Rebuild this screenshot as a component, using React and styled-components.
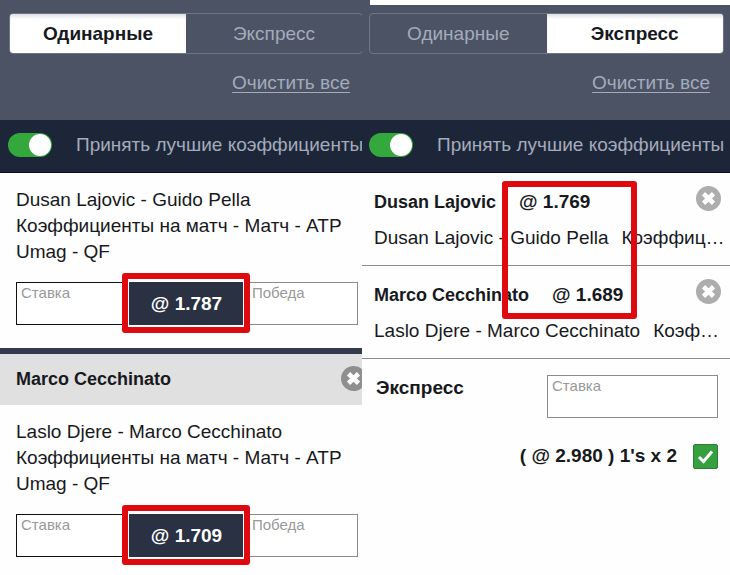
import React, { useState } from 'react';
import styled, { createGlobalStyle } from 'styled-components';

const GlobalStyle = createGlobalStyle`
  * {
    box-sizing: border-box;
  }

  body {
    margin: 0;
    background: #fefefe;
    color: #17191d;
    font-family: "Liberation Sans", Arial, sans-serif;
    font-size: 19px;
    line-height: 26px;
  }

  button, input {
    font: inherit;
    margin: 0;
  }
`;

const Page = styled.main`
  display: grid;
  grid-template-columns: 362fr 368fr;
`;

const Pane = styled.section`
  min-width: 0;
  overflow: hidden;
`;

const Header = styled.header`
  display: flex;
  flex-direction: column;
  align-items: flex-end;
  height: 120px;
  padding: 13px 0 0 ${props => (props.$cut ? 9 : 7)}px;
  background: #4b5365;
  position: relative;
`;

// white strip left over the top of the second slip
const TopStrip = styled.div`
  position: absolute;
  top: 0;
  left: 8px;
  right: 0;
  height: 5px;
  background: #fff;
`;

const Tabs = styled.div`
  display: flex;
  align-self: stretch;
  height: 41px;
  margin-right: ${props => (props.$cut ? -1 : 6)}px;
  border: 1px solid #6d7587;
  border-radius: 4px;
  overflow: hidden;
`;

const Tab = styled.button`
  flex: 1;
  padding: 0;
  border: 0;
  background: ${props => (props.$active ? '#fff' : 'transparent')};
  box-shadow: ${props => (props.$active ? 'inset 0 4px 4px -2px #d5d8de' : 'none')};
  color: ${props => (props.$active ? '#17191d' : '#a4abbb')};
  font-weight: ${props => (props.$active ? 'bold' : 'normal')};
`;

const ClearLink = styled.a`
  margin: 16px ${props => (props.$cut ? 12 : 20)}px 0 0;
  color: #a4abbb;
  text-underline-offset: 3px;
  text-decoration-thickness: 1px;
`;

const AcceptBar = styled.label`
  display: flex;
  align-items: center;
  gap: 24px;
  height: 53px;
  padding: 0 0 2px ${props => (props.$cut ? 8 : 7)}px;
  border-bottom: 1px solid #0b0f1c;
  background: #1d2638;
  color: #a4abbb;
  white-space: nowrap;
`;

const Switch = styled.input`
  appearance: none;
  display: flex;
  flex: none;
  justify-content: flex-start;
  width: 44px;
  height: 24px;
  padding: 1px;
  border-radius: 12px;
  background: #7d8494;

  &::before {
    content: "";
    width: 22px;
    height: 22px;
    border-radius: 50%;
    background: #fff;
  }

  &:checked {
    justify-content: flex-end;
    background: #35a83d;
  }
`;

const Bet = styled.article`
  padding: 14px 4px 23px 16px;
`;

const BetInfo = styled.p`
  margin: 0 0 17px;
`;

const StakeRow = styled.div`
  display: grid;
  grid-template-columns: 113fr 118fr 111fr;
  height: 43px;
`;

const Field = styled.input`
  display: block;
  width: 100%;
  min-width: 0;
  height: 43px;
  padding: 0 4px 22px;
  border: 1px solid ${props => (props.$dark ? '#111' : '#8a8a8a')};
  border-radius: 0;
  outline: 0;
  background: #fff;
  font-size: 15px;
  line-height: 18px;

  &::placeholder {
    color: #999;
    opacity: 1;
  }
`;

const OddsBox = styled.div`
  display: flex;
  align-items: center;
  justify-content: center;
  position: relative;
  margin-right: 3px;
  background: #293143;
  color: #fff;
  font-weight: bold;
`;

const OddsMark = styled.div`
  position: absolute;
  inset: -9px -6px -8px -7px;
  border: 6px solid #df0a10;
  border-radius: 3px;
  box-shadow: inset 0 0 0 1px #fff;
`;

const BetHeading = styled.div`
  display: flex;
  align-items: center;
  justify-content: space-between;
  height: 57px;
  padding: 0 0 2px 16px;
  border-top: 6px solid #333c4d;
  background: #e0e0e0;
`;

const Name = styled.h2`
  margin: 0;
  font-size: 18px;
  font-weight: bold;
`;

const CloseButton = styled.button`
  display: flex;
  flex: none;
  padding: 0;
  border: 0;
  background: none;
  color: ${props => (props.$dark ? '#8f8f8f' : '#adadad')};
  margin-right: ${props => (props.$dark ? -4 : 0)}px;
`;

const Legs = styled.div`
  position: relative;
`;

const Leg = styled.article`
  height: 93px;
  padding: 13px 9px 0 12px;
  border-bottom: 1px solid #8c8c8c;
`;

const LegTop = styled.div`
  display: flex;
  align-items: center;
  height: 32px;

  ${CloseButton} {
    align-self: flex-start;
  }
`;

const LegOdds = styled.strong`
  flex: 1;
  margin-left: 23px;
`;

const LegInfo = styled.p`
  margin: 7px -5px 0 0;
  overflow: hidden;
  text-overflow: ellipsis;
  white-space: nowrap;

  span {
    margin-left: 13px;
  }
`;

const LegsMark = styled.div`
  position: absolute;
  top: 8px;
  left: 140px;
  width: 135px;
  height: 138px;
  border: 6px solid #df0a10;
  border-radius: 3px;
`;

const Express = styled.div`
  display: flex;
  justify-content: space-between;
  padding: 16px 12px 0 14px;
`;

const ExpressLabel = styled.label`
  font-weight: bold;
`;

const StakeCell = styled.div`
  width: 50%;
  max-width: 171px;
`;

const Total = styled.label`
  display: flex;
  align-items: center;
  justify-content: flex-end;
  gap: 16px;
  padding: 25px 12px 0 0;
  font-weight: bold;
`;

const CheckWrap = styled.span`
  display: grid;
  width: 25px;
  height: 25px;

  > * {
    grid-area: 1 / 1;
  }

  svg {
    pointer-events: none;
  }
`;

const Check = styled.input`
  appearance: none;
  width: 25px;
  height: 25px;
  border: 1px solid #2b7f34;
  border-radius: 2px;
  background: #35a03d;
`;

function Close({ dark }) {
  return (
    <CloseButton type="button" aria-label="Удалить" $dark={dark}>
      <svg width="25" height="25" viewBox="0 0 25 25">
        <circle cx="12.5" cy="12.5" r="12.5" fill="currentColor" />
        <path d="M7.5 7.8 L17.5 17.2 M17.5 7.8 L7.5 17.2" stroke="#fff" strokeWidth="4.6" />
      </svg>
    </CloseButton>
  );
}

function SlipHeader({ cut, initial }) {
  const [tab, setTab] = useState(initial);
  const [accept, setAccept] = useState(true);

  return (
    <>
      <Header $cut={cut}>
        {!cut && <TopStrip />}
        <Tabs $cut={cut}>
          <Tab type="button" $active={tab === 'single'} onClick={() => setTab('single')}>Одинарные</Tab>
          <Tab type="button" $active={tab === 'express'} onClick={() => setTab('express')}>Экспресс</Tab>
        </Tabs>
        <ClearLink href="#" $cut={cut}>Очистить все</ClearLink>
      </Header>
      <AcceptBar $cut={cut}>
        <Switch type="checkbox" checked={accept} onChange={() => setAccept(!accept)} />
        Принять лучшие коэффициенты
      </AcceptBar>
    </>
  );
}

function SingleBet({ match, odds }) {
  return (
    <Bet>
      <BetInfo>
        {match}<br />
        Коэффициенты на матч - Матч - ATP Umag - QF
      </BetInfo>
      <StakeRow>
        <Field $dark placeholder="Ставка" aria-label="Ставка" />
        <OddsBox>
          @ {odds}
          <OddsMark />
        </OddsBox>
        <Field placeholder="Победа" aria-label="Победа" />
      </StakeRow>
    </Bet>
  );
}

function ExpressLeg({ name, odds, match }) {
  return (
    <Leg>
      <LegTop>
        <Name>{name}</Name>
        <LegOdds>@ {odds}</LegOdds>
        <Close />
      </LegTop>
      <LegInfo>{match}<span>Коэффициенты на матч</span></LegInfo>
    </Leg>
  );
}

function App() {
  return (
    <>
      <GlobalStyle />
      <Page>
        <Pane>
          <SlipHeader cut initial="single" />
          <SingleBet match="Dusan Lajovic - Guido Pella" odds="1.787" />
          <BetHeading>
            <Name>Marco Cecchinato</Name>
            <Close dark />
          </BetHeading>
          <SingleBet match="Laslo Djere - Marco Cecchinato" odds="1.709" />
        </Pane>
        <Pane>
          <SlipHeader initial="express" />
          <Legs>
            <ExpressLeg name="Dusan Lajovic" odds="1.769" match="Dusan Lajovic - Guido Pella" />
            <ExpressLeg name="Marco Cecchinato" odds="1.689" match="Laslo Djere - Marco Cecchinato" />
            <LegsMark />
          </Legs>
          <Express>
            <ExpressLabel htmlFor="express-stake">Экспресс</ExpressLabel>
            <StakeCell>
              <Field id="express-stake" placeholder="Ставка" />
            </StakeCell>
          </Express>
          <Total>
            ( @ 2.980 ) 1's x 2
            <CheckWrap>
              <Check type="checkbox" defaultChecked />
              <svg width="25" height="25" viewBox="0 0 25 25">
                <path d="M6 13 L10.5 17.5 L19 7.5" fill="none" stroke="#fff" strokeWidth="3" />
              </svg>
            </CheckWrap>
          </Total>
        </Pane>
      </Page>
    </>
  );
}

export default App;
